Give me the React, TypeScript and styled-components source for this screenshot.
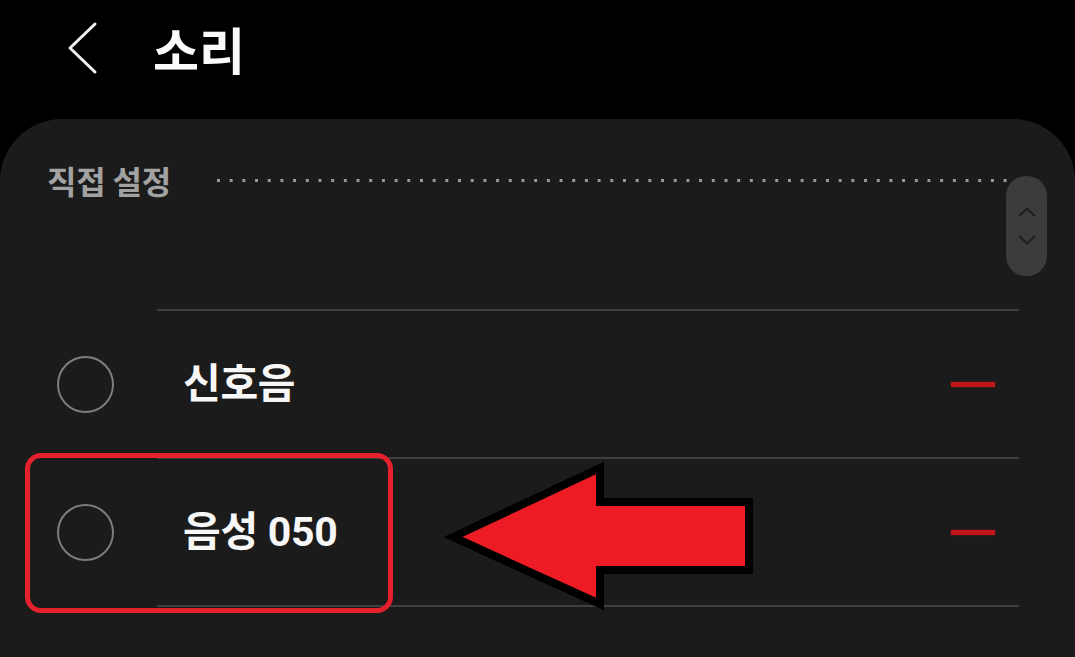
import React from "react";
import styled, { createGlobalStyle } from "styled-components";

const GlobalStyle = createGlobalStyle`
  html, body {
    margin: 0;
    padding: 0;
    background: #000;
    overflow: hidden;
  }
  * {
    box-sizing: border-box;
  }
`;

const Page = styled.div`
  position: relative;
  width: 1075px;
  height: 657px;
  background: #000;
  display: flex;
  flex-direction: column;
  font-family: "Noto Sans CJK KR", "Noto Sans", Roboto, sans-serif;
  overflow: hidden;
`;

const Header = styled.div`
  height: 119px;
  flex-shrink: 0;
  display: flex;
  align-items: center;
  padding-left: 66px;
  padding-bottom: 24px;
`;

const BackButton = styled.div`
  width: 36px;
  height: 56px;
  display: flex;
  align-items: center;
  justify-content: center;
`;

const Title = styled.h1`
  margin: 0 0 0 51px;
  font-size: 50px;
  font-weight: 700;
  color: #fafafa;
  letter-spacing: 0;
  line-height: 1;
`;

const Card = styled.div`
  position: relative;
  flex: 1;
  background: #1b1b1b;
  border-radius: 62px 62px 0 0;
  display: flex;
  flex-direction: column;
`;

const SectionHeader = styled.div`
  display: flex;
  height: 122px;
  padding: 41px 57px 41px 47px;
  align-items: flex-start;
`;

const SectionTitle = styled.span`
  font-size: 32px;
  font-weight: 700;
  color: #a2a2a2;
  line-height: 40px;
  letter-spacing: -0.2px;
`;

const DottedLine = styled.div`
  flex: 1;
  height: 3px;
  margin: 19px 0 0 46px;
  background-image: linear-gradient(to right, #9a9a9a 3px, transparent 3px);
  background-size: 12.7px 3px;
  background-repeat: repeat-x;
`;

const Spacer = styled.div`
  height: 68px;
`;

const Divider = styled.div`
  height: 2px;
  margin: 0 56px 0 157px;
  background: #3f3f3f;
`;

const Row = styled.div`
  height: 146px;
  display: flex;
  align-items: center;
`;

const Radio = styled.div`
  width: 57px;
  height: 57px;
  margin-left: 57px;
  border-radius: 50%;
  border: 2.5px solid #7d7d7d;
  flex-shrink: 0;
`;

const RowLabel = styled.span`
  margin-left: 69px;
  font-family: Roboto, "Noto Sans CJK KR", sans-serif;
  font-size: 41px;
  font-weight: 700;
  color: #f7f7f7;
  letter-spacing: -0.3px;
  line-height: 1;
`;

const RemoveBar = styled.div`
  margin-left: auto;
  margin-right: 80px;
  width: 44px;
  height: 5px;
  background: #c2161b;
  box-shadow: 0 0 2px rgba(194, 22, 27, 0.6);
`;

const ScrollHandle = styled.div`
  position: absolute;
  top: 57px;
  right: 28px;
  width: 41px;
  height: 100px;
  border-radius: 20px;
  background: #3c3c3c;
  display: flex;
  flex-direction: column;
  align-items: center;
  justify-content: center;
  gap: 18px;
`;

const HighlightBox = styled.div`
  position: absolute;
  left: 25px;
  top: 453px;
  width: 368px;
  height: 160px;
  border: 5px solid #e3202b;
  border-radius: 16px;
  pointer-events: none;
`;

const ArrowOverlay = styled.svg`
  position: absolute;
  left: 0;
  top: 0;
  pointer-events: none;
`;

const items = ["신호음", "음성 050"];

const App: React.FC = () => {
  return (
    <>
      <GlobalStyle />
      <Page>
        <Header>
          <BackButton>
            <svg width="36" height="56" viewBox="0 0 36 56">
              <polyline
                points="29,4 4,28 29,52"
                fill="none"
                stroke="#f2f2f2"
                strokeWidth="3"
                strokeLinecap="round"
                strokeLinejoin="round"
              />
            </svg>
          </BackButton>
          <Title>소리</Title>
        </Header>
        <Card>
          <SectionHeader>
            <SectionTitle>직접 설정</SectionTitle>
            <DottedLine />
          </SectionHeader>
          <Spacer />
          <Divider />
          {items.map((label, i) => (
            <React.Fragment key={i}>
              <Row>
                <Radio />
                <RowLabel>{label}</RowLabel>
                <RemoveBar />
              </Row>
              <Divider />
            </React.Fragment>
          ))}
          <ScrollHandle>
            <svg width="18" height="10" viewBox="0 0 18 10">
              <polyline
                points="1,9 9,1.5 17,9"
                fill="none"
                stroke="#1e1e1e"
                strokeWidth="2"
              />
            </svg>
            <svg width="18" height="10" viewBox="0 0 18 10">
              <polyline
                points="1,1 9,8.5 17,1"
                fill="none"
                stroke="#1e1e1e"
                strokeWidth="2"
              />
            </svg>
          </ScrollHandle>
        </Card>
        <HighlightBox />
        <ArrowOverlay width="1075" height="657" viewBox="0 0 1075 657">
          <polygon
            points="453,537 600,468 600,502 749,502 749,570 600,570 600,604"
            fill="#ed1c24"
            stroke="#000"
            strokeWidth="8"
            strokeLinejoin="miter"
          />
        </ArrowOverlay>
      </Page>
    </>
  );
};

export default App;
